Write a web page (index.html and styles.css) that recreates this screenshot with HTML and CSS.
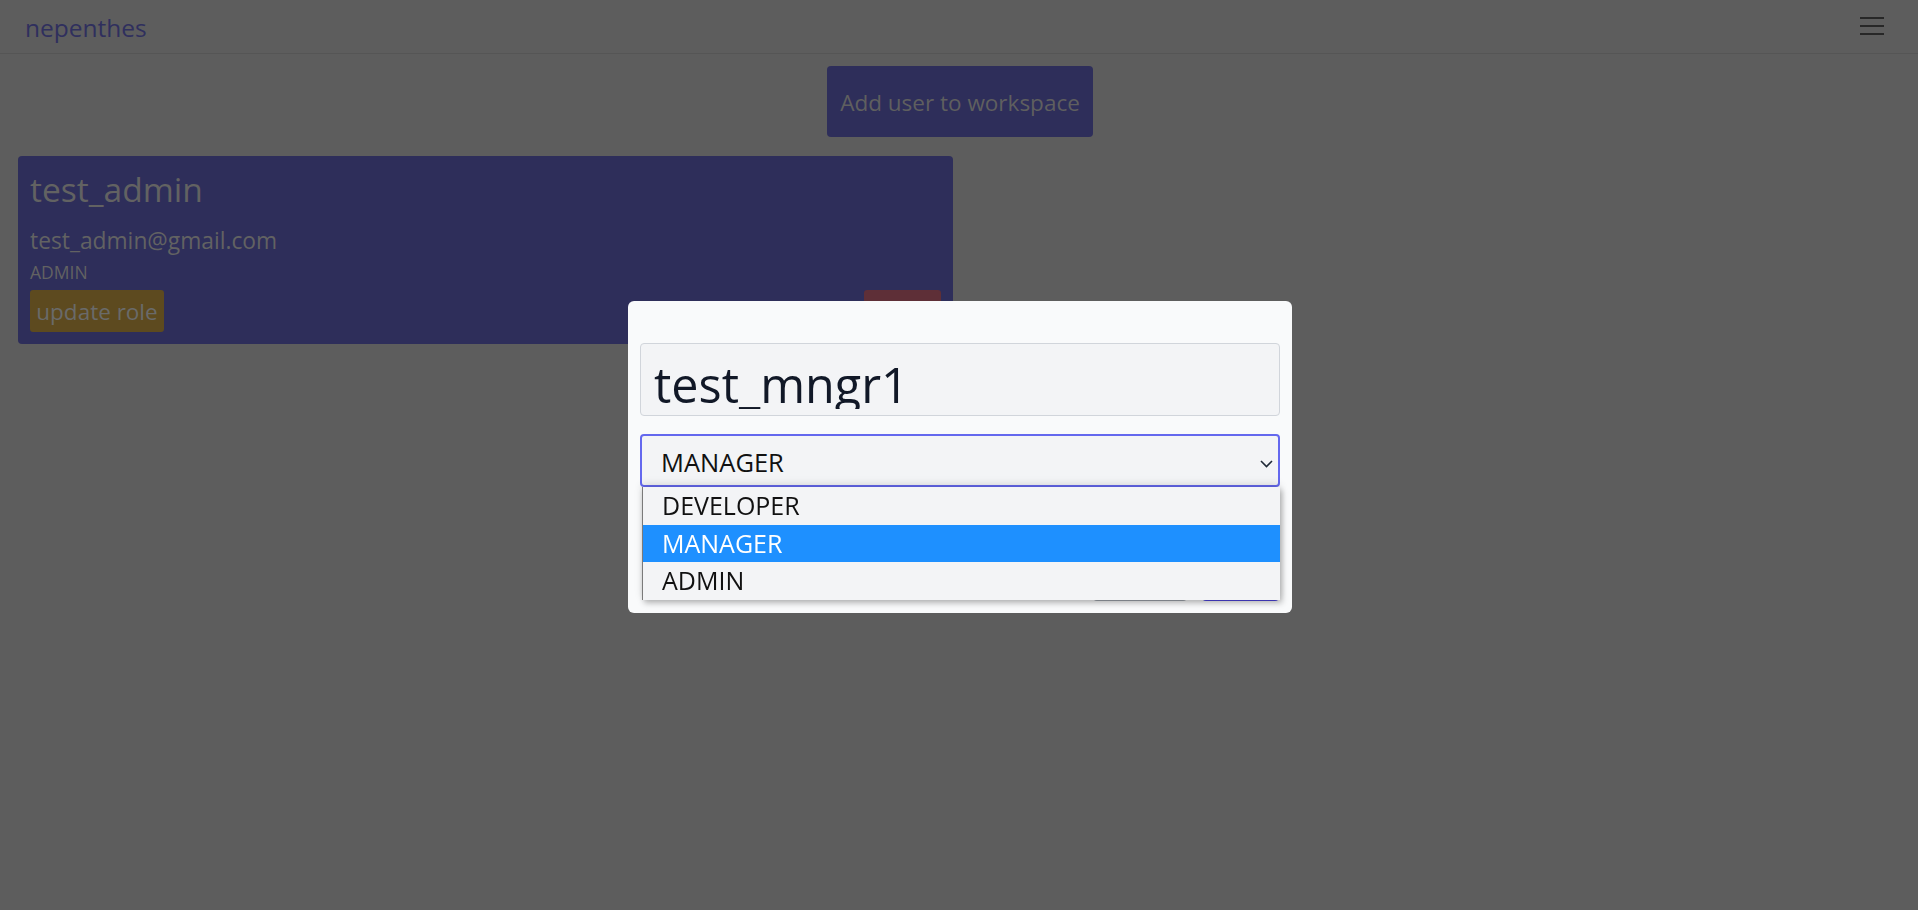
FILE: index.html
```html
<!DOCTYPE html>
<html lang="en">
<head>
<meta charset="utf-8">
<title>nepenthes</title>
<link rel="stylesheet" href="styles.css">
</head>
<body>
<header class="navbar">
  <a class="brand" href="#">nepenthes</a>
  <button class="toggler" aria-label="menu">
    <svg width="24" height="18" viewBox="0 0 24 18"><path d="M0 1h24M0 9h24M0 17h24" stroke="#161616" stroke-width="1.6" fill="none"/></svg>
  </button>
</header>
<main class="page">
  <div class="actions">
    <button class="btn-add">Add user to workspace</button>
  </div>
  <div class="user-grid">
    <section class="user-card">
      <h3 class="user-name">test_admin</h3>
      <p class="user-email">test_admin@gmail.com</p>
      <p class="user-role">ADMIN</p>
      <div class="card-actions">
        <button class="btn-update">update role</button>
        <button class="btn-delete">delete</button>
      </div>
    </section>
  </div>
</main>
<div class="backdrop">
  <div class="modal">
    <div class="name-field"><span class="name-text">test_mngr1</span></div>
    <div class="select-wrap">
      <div class="select">
        <span class="select-value">MANAGER</span>
        <svg class="chevron" width="13" height="8" viewBox="0 0 13 8"><path d="M1 1l5.5 5.5L12 1" stroke="#1f2937" stroke-width="1.6" fill="none"/></svg>
      </div>
      <ul class="options">
        <li class="option">DEVELOPER</li>
        <li class="option selected">MANAGER</li>
        <li class="option">ADMIN</li>
      </ul>
    </div>
    <div class="modal-footer">
      <button class="btn-cancel">Cancel</button>
      <button class="btn-save">Save</button>
    </div>
  </div>
</div>
</body>
</html>
```

FILE: styles.css
```css
* { box-sizing: border-box; }
html, body { margin: 0; padding: 0; }
body {
  background: #5d5d5d;
  font-family: "Open Sans", "Noto Sans", sans-serif;
  width: 1918px;
  height: 910px;
  overflow: hidden;
}
button { font-family: inherit; border: 0; cursor: pointer; }

.navbar {
  height: 54px;
  border-bottom: 1px solid #555555;
  display: flex;
  justify-content: space-between;
  align-items: flex-start;
  padding: 13px 34px 0 25px;
}
.brand {
  color: #2f2f5d;
  font-size: 24.5px;
  line-height: 30px;
  text-decoration: none;
}
.toggler {
  background: transparent;
  padding: 0;
  margin-top: 4px;
  width: 24px;
  height: 18px;
  display: flex;
}

.page { padding: 12px 18px 0; }
.actions { display: flex; justify-content: center; }
.btn-add {
  background: #2e2e5a;
  color: #5f5f5f;
  font-size: 22.5px;
  line-height: 32px;
  padding: 21px 13px 18px;
  border-radius: 4px;
  margin-left: 2px;
}
.user-grid { margin-top: 19px; display: grid; grid-template-columns: 935px; }
.user-card {
  background: #2e2e5a;
  border-radius: 4px;
  padding: 13px 12px 12px;
  color: #626262;
}
.user-name {
  margin: 0;
  font-weight: 400;
  font-size: 33.6px;
  line-height: 40px;
}
.user-email {
  margin: 16px 0 0;
  font-size: 22.8px;
  line-height: 32px;
}
.user-role {
  margin: 5px 0 0;
  font-size: 17.5px;
  line-height: 20px;
}
.card-actions {
  margin-top: 8px;
  display: flex;
  justify-content: space-between;
}
.btn-update {
  background: #5d4a1f;
  color: #6a6a6a;
  font-size: 22.5px;
  line-height: 32px;
  padding: 6px 6px 4px;
  border-radius: 3px;
  width: 134px;
}
.btn-delete {
  background: #5e2f37;
  color: #6a6a6a;
  font-size: 22.5px;
  line-height: 32px;
  padding: 6px 6px 4px;
  border-radius: 3px;
  width: 77px;
}

.backdrop {
  position: fixed;
  inset: 0;
  display: flex;
  align-items: center;
  justify-content: center;
  padding: 4px 0 0 2px;
}
.modal {
  width: 664px;
  height: 312px;
  background: #f9fafb;
  border-radius: 6px;
  padding: 42px 12px 12px;
  display: flex;
  flex-direction: column;
}
.name-field {
  height: 73px;
  background: #f3f4f6;
  border: 1px solid #d1d5db;
  border-radius: 4px;
  padding: 12px 13px 0;
}
.name-text {
  display: block;
  height: 53px;
  overflow: hidden;
  font-size: 48.5px;
  line-height: 56px;
  color: #111827;
}
.select-wrap { position: relative; margin-top: 18px; }
.select {
  height: 53px;
  border: 2px solid #6468ee;
  border-radius: 4px;
  background: #f3f4f6;
  padding: 9px 5px 0 19px;
  display: flex;
  justify-content: space-between;
  align-items: flex-start;
}
.select-value {
  font-size: 25.5px;
  line-height: 34px;
  color: #111111;
}
.chevron { margin-top: 15px; }
.options {
  position: absolute;
  left: 2px;
  right: 0;
  top: 53px;
  margin: 0;
  padding: 0;
  list-style: none;
  background: #f3f4f6;
  border-left: 1px solid #7a7a7a;
  box-shadow: 2px 3px 6px rgba(0, 0, 0, 0.28), 0 -3px 8px rgba(0, 0, 0, 0.12);
  z-index: 2;
}
.option {
  height: 37.67px;
  padding: 0 0 0 19px;
  font-size: 25px;
  line-height: 36.67px;
  color: #111111;
}
.option.selected { background: #1e90ff; color: #ffffff; }
.modal-footer {
  margin-top: auto;
  display: flex;
  justify-content: flex-end;
  gap: 15px;
}
.btn-cancel, .btn-save {
  height: 40px;
  border-radius: 4px;
  font-size: 18px;
  color: #ffffff;
}
.btn-cancel { width: 94px; background: #a3a9b1; }
.btn-save { width: 77px; background: #4f46e5; margin-right: 1px; }
```
